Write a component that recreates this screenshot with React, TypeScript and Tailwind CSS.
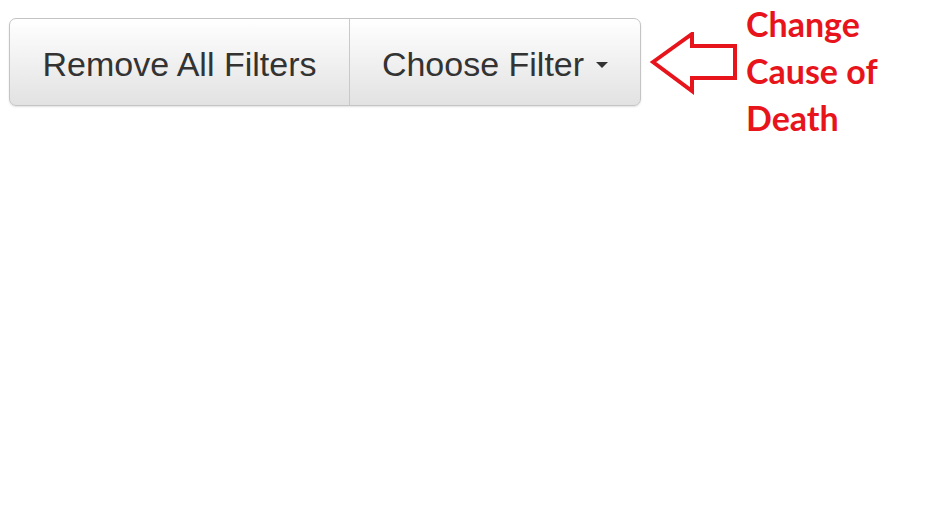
import React from "react";

export default function App() {
  return (
    <div className="w-[934px] h-[526px] bg-white relative overflow-hidden">
      <div className="flex items-start pt-[18px] pl-[9px]">
        <div
          className="flex h-[88px] rounded-[7px] border border-[#c4c4c4] shadow-[0_1px_2px_rgba(0,0,0,0.12)] bg-gradient-to-b from-white to-[#e2e2e2] text-[#333] text-[34px] overflow-hidden"
          style={{ fontFamily: "'Liberation Sans', Arial, sans-serif" }}
        >
          <div className="w-[340px] flex items-center justify-center border-r border-[#c9c9c9] pt-[4px]">
            <span>Remove All Filters</span>
          </div>
          <div className="w-[290px] flex items-center justify-center gap-[12px] pt-[4px]">
            <span>Choose Filter</span>
            <span className="w-0 h-0 border-l-[6px] border-r-[6px] border-t-[6px] border-l-transparent border-r-transparent border-t-[#333] mt-[2px]" />
          </div>
        </div>
        <svg width="90" height="64" viewBox="0 0 90 64" className="ml-[9px] mt-[14px]">
          <polygon
            points="3,30 42,2 42,14 85,14 85,46 42,46 42,59"
            fill="none"
            stroke="#e8141c"
            strokeWidth="4"
            strokeLinejoin="miter"
          />
        </svg>
        <div
          className="ml-[6px] -mt-[18px] text-[#e8141c] font-bold text-[34px] leading-[47px]"
          style={{ fontFamily: "Lato, 'Open Sans', sans-serif" }}
        >
          Change
          <br />
          Cause of
          <br />
          Death
        </div>
      </div>
    </div>
  );
}
